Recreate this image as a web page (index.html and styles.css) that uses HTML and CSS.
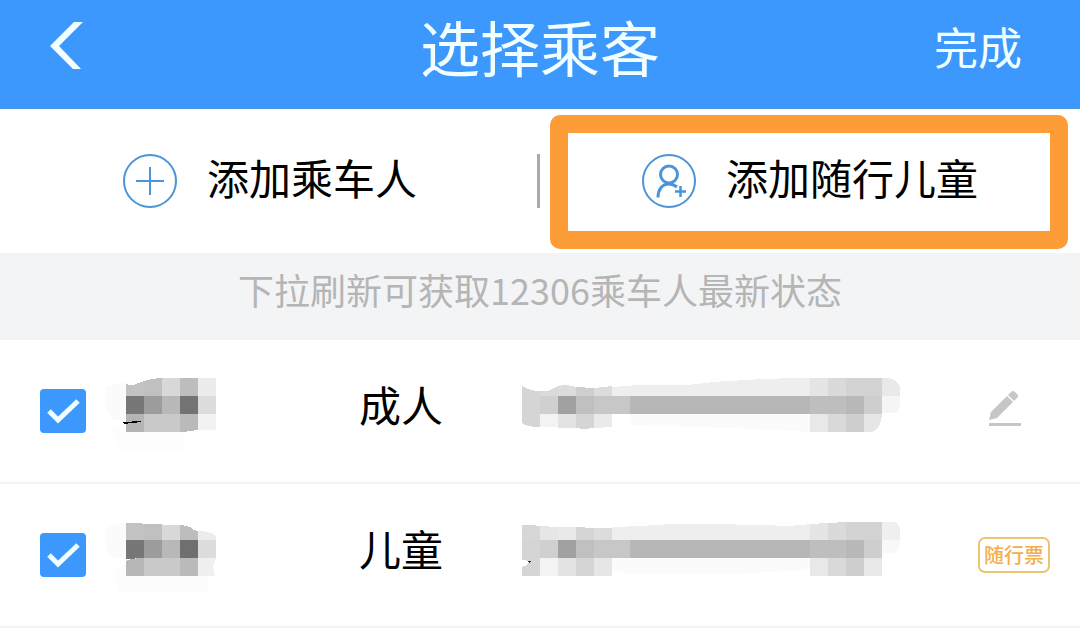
FILE: index.html
```html
<!doctype html>
<html lang="zh-CN">
<head>
<meta charset="utf-8">
<meta name="viewport" content="width=device-width">
<title>选择乘客</title>
<link rel="stylesheet" href="styles.css">
</head>
<body>
    <header>
        <button type="button" class="back" aria-label="返回">
            <svg width="34" height="48" viewBox="0 0 34 48"><path d="M24 0h9L9 24l22 23h-8L0 24z" fill="#f2ffff"/></svg>
        </button>
        <h1>选择乘客</h1>
        <button type="button" class="done">完成</button>
    </header>

    <nav>
        <button type="button" class="add">
            <svg width="54" height="54" viewBox="0 0 54 54" fill="none" stroke="#4b94d8" stroke-width="2">
                <circle cx="27" cy="27" r="26"/>
                <path d="M13 27h28M27 13v28"/>
            </svg>
            <span>添加乘车人</span>
        </button>
        <button type="button" class="add highlight">
            <svg width="54" height="54" viewBox="0 0 54 54" fill="none" stroke="#4b94d8" stroke-width="2">
                <circle cx="27" cy="27" r="26"/>
                <circle cx="27" cy="20.500" r="8.500" stroke-width="3"/>
                <path d="M16 43.500c0-8 4-13.500 11-13.500 3 0 5.500 1 8 3" stroke-width="3"/>
                <path d="M33 37.500h11M38.500 32v11" stroke-width="2.500"/>
            </svg>
            <span>添加随行儿童</span>
        </button>
    </nav>

    <p class="hint">下拉刷新可获取12306乘车人最新状态</p>

    <ul class="passengers">
        <li>
            <label class="tick">
                <input type="checkbox" checked aria-label="成人">
                <svg width="46" height="44" viewBox="0 0 46 44"><path d="M9 22l9 9 20-19" fill="none" stroke="#f2ffff" stroke-width="5"/></svg>
            </label>
            <!-- masked name -->
            <svg class="mask" width="120" height="80" viewBox="106 372 120 80" shape-rendering="crispEdges">
                <path d="M106 387q10-5 20-5v38h-12q-8-6-8-16z" fill="#fbfbfb"/>
                <path d="M112 426h14v6h57v20h-65z" fill="#fdfdfd"/>
                <path d="M126 384q6 2 10 0l8-3v15h-18z" fill="#c3c3c3"/>
                <path d="M144 381q9-3 18-3v18h-18z" fill="#c0c0c0"/>
                <path d="M162 378h18v18h-18z" fill="#d8d8d8"/>
                <path d="M180 378h18v18h-18z" fill="#bdbdbd"/>
                <path d="M198 378h16l2 2v16h-18z" fill="#ececec"/>
                <path d="M126 396h18v18h-18z" fill="#777"/>
                <path d="M144 396h18v18h-18z" fill="#9c9c9c"/>
                <path d="M162 396h18v18h-18z" fill="#b8b8b8"/>
                <path d="M180 396h18v18h-18z" fill="#737373"/>
                <path d="M198 396h18v18h-18z" fill="#dcdcdc"/>
                <path d="M126 414h18v18h-18z" fill="#b4b4b4"/>
                <path d="M144 414h36v18h-36z" fill="#c9c9c9"/>
                <path d="M180 414h18v16l-15 2h-3z" fill="#bababa"/>
                <path d="M198 414h18v16h-18z" fill="#f2f2f2"/>
                <path d="M123 422l18-1v1l-17 2z" fill="#000"/>
            </svg>
            <span class="type">成人</span>
            <!-- masked document number -->
            <svg class="mask" width="380" height="80" viewBox="522 372 380 80" shape-rendering="crispEdges">
                <path d="M630 414h180v18l-80-4-100-3z" fill="#fbfbfb"/>
                <path d="M522 386q8 5 18 5v36q-14 0-18-4z" fill="#d5d5d5"/>
                <path d="M540 391h8q5-3 10-5v10h-18z" fill="#dadada"/>
                <path d="M558 386q9-2 18 1v9h-18z" fill="#dcdcdc"/>
                <path d="M576 387l18 1v8h-18z" fill="#cfcfcf"/>
                <path d="M594 388l18-2v10h-18z" fill="#dcdcdc"/>
                <path d="M612 387q20-2 40-2h35q30-4 60-5 30-2 63-2v18H612z" fill="#eee"/>
                <path d="M810 378h18v18h-18z" fill="#e5e5e5"/>
                <path d="M828 378h18v18h-18z" fill="#dadada"/>
                <path d="M846 378h36v18h-36z" fill="#d3d3d3"/>
                <path d="M882 378h6q12 2 12 12v6h-18z" fill="#e9e9e9"/>
                <path d="M540 396h18v18h-18z" fill="#d0d0d0"/>
                <path d="M558 396h18v18h-18z" fill="#a1a1a1"/>
                <path d="M576 396h18v18h-18z" fill="#c0c0c0"/>
                <path d="M594 396h36v18h-36z" fill="#c7c7c7"/>
                <path d="M630 396h180v18h-180z" fill="#b7b7b7"/>
                <path d="M810 396h36v18h-36z" fill="#bebebe"/>
                <path d="M846 396h18v18h-18z" fill="#b8b8b8"/>
                <path d="M864 396h18v18h-18z" fill="#cecece"/>
                <path d="M882 396h18v10q-1 7-7 7h-11z" fill="#f5f5f5"/>
                <path d="M540 414h18v13h-18z" fill="#f3f3f3"/>
                <path d="M558 414h18v14h-18z" fill="#e3e3e3"/>
                <path d="M576 414h18v14l-10 1-8-1z" fill="#d5d5d5"/>
                <path d="M594 414h18v13l-18 1z" fill="#eaeaea"/>
                <path d="M810 414h18v18h-18z" fill="#e8e8e8"/>
                <path d="M828 414h18v18h-18z" fill="#d9d9d9"/>
                <path d="M846 414h18v18h-18z" fill="#cecece"/>
                <path d="M864 414h18q-1 16-11 18h-7z" fill="#e6e6e6"/>
            </svg>
            <button type="button" class="edit" aria-label="编辑">
                <svg width="34" height="38" viewBox="0 0 34 38" fill="#c6c6c6">
                    <path d="M1 33h32v3H1z"/>
                    <path d="M1 30l2-8L19 6l6 6L9 28z"/>
                    <path d="M20 5l3-3q2-2 4 0l2 2q2 2 0 4l-3 3z"/>
                </svg>
            </button>
        </li>
        <li>
            <label class="tick">
                <input type="checkbox" checked aria-label="儿童">
                <svg width="46" height="44" viewBox="0 0 46 44"><path d="M9 22l9 9 20-19" fill="none" stroke="#f2ffff" stroke-width="5"/></svg>
            </label>
            <svg class="mask" width="120" height="80" viewBox="106 516 120 80" shape-rendering="crispEdges">
                <path d="M106 528q10-5 20-5v35h-12q-8-6-8-16z" fill="#fbfbfb"/>
                <path d="M114 571l12-8v13h82v16h-88z" fill="#fcfcfc"/>
                <path d="M126 523h14l4 1v16h-18z" fill="#c3c3c3"/>
                <path d="M144 524h18v16h-18z" fill="#c0c0c0"/>
                <path d="M162 525h18v15h-18z" fill="#d8d8d8"/>
                <path d="M180 525q11 1 14 5l4 1v9h-18z" fill="#bdbdbd"/>
                <path d="M198 531q14 0 18 6v3h-18z" fill="#ececec"/>
                <path d="M126 540h18v18l-18 1z" fill="#777"/>
                <path d="M144 540h18v18h-18z" fill="#9c9c9c"/>
                <path d="M162 540h18v18h-18z" fill="#b8b8b8"/>
                <path d="M180 540h18v18h-18z" fill="#6f6f6f"/>
                <path d="M198 540h18v18h-18z" fill="#dcdcdc"/>
                <path d="M126 561q6-3 18-3v18h-18z" fill="#b7b7b7"/>
                <path d="M144 558h36v18h-36z" fill="#c9c9c9"/>
                <path d="M180 558h18v18h-18z" fill="#bababa"/>
                <path d="M198 558h18l-3 8 2 10h-17z" fill="#f0f0f0"/>
            </svg>
            <span class="type">儿童</span>
            <svg class="mask" width="380" height="80" viewBox="522 516 380 80" shape-rendering="crispEdges">
                <path d="M612 558h198v12l-80 4h-100l-18-4z" fill="#fbfbfb"/>
                <path d="M522 525h10l8 1v14h-18z" fill="#d7d7d7"/>
                <path d="M540 526l18 1v13h-18z" fill="#e6e6e6"/>
                <path d="M558 527h18v13h-18z" fill="#e9e9e9"/>
                <path d="M576 527l18 1v12h-18z" fill="#d5d5d5"/>
                <path d="M594 528h18v12h-18z" fill="#dcdcdc"/>
                <path d="M612 527q35-1 60-3h30l65 1q25 2 43-1v16H612z" fill="#eee"/>
                <path d="M810 524l18-1v17h-18z" fill="#e5e5e5"/>
                <path d="M828 523l18-1v18h-18z" fill="#dadada"/>
                <path d="M846 522h36v18h-36z" fill="#d3d3d3"/>
                <path d="M882 522h13q5 2 5 8v10h-18z" fill="#efefef"/>
                <path d="M522 540h18v36h-18z" fill="#d5d5d5"/>
                <path d="M540 540h18v18h-18z" fill="#d0d0d0"/>
                <path d="M558 540h18v18h-18z" fill="#a1a1a1"/>
                <path d="M576 540h18v18h-18z" fill="#c0c0c0"/>
                <path d="M594 540h36v18h-36z" fill="#c7c7c7"/>
                <path d="M630 540h180v18h-180z" fill="#b7b7b7"/>
                <path d="M810 540h36v18h-36z" fill="#bebebe"/>
                <path d="M846 540h18v18h-18z" fill="#b8b8b8"/>
                <path d="M864 540h18v18h-18z" fill="#cecece"/>
                <path d="M882 540h18q0 12-7 13h-11z" fill="#f8f8f8"/>
                <path d="M522 560l8 1-3 4-5 2z" fill="#fff"/>
                <path d="M527 561h4l-2 2z" fill="#333"/>
                <path d="M540 558h18v18h-18z" fill="#f3f3f3"/>
                <path d="M558 558h18v18h-18z" fill="#e3e3e3"/>
                <path d="M576 558h18v18h-18z" fill="#d5d5d5"/>
                <path d="M594 558h18v18h-18z" fill="#e6e6e6"/>
                <path d="M810 558h18v18h-18z" fill="#e8e8e8"/>
                <path d="M828 558h18v18h-18z" fill="#d9d9d9"/>
                <path d="M846 558h18v18h-18z" fill="#cecece"/>
                <path d="M864 558h18v18h-18z" fill="#e8e8e8"/>
            </svg>
            <span class="tag">随行票</span>
        </li>
    </ul>
</body>
</html>
```
FILE: styles.css
```css
*
{
    box-sizing:border-box;
}
body
{
    margin:0;
    background:#fff;
    color:#000;
    font-family:"Noto Sans CJK SC", sans-serif;
}
button
{
    border:none;
    padding:0;
    background:none;
    color:inherit;
    font-family:inherit;
    cursor:pointer;
}
svg
{
    display:block;
}

header
{
    display:grid;
    grid-template-columns:1fr auto 1fr;
    align-items:center;
    padding-bottom:15px;
    border-bottom:2px solid #4b95e2;
    background:#3c98fc;
    color:#f2ffff;
}
h1
{
    margin:0;
    font-size:60px;
    font-weight:normal;
    line-height:92px;
}
.back
{
    justify-self:start;
    margin-left:50px;
}
.done
{
    justify-self:end;
    margin-right:58px;
    font-size:44px;
    line-height:64px;
}

nav
{
    display:grid;
    grid-template-columns:1fr 1fr;
}
.add
{
    position:relative;
    display:flex;
    align-items:center;
    justify-content:center;
    gap:30px;
    height:144px;
    font-size:42px;
    line-height:64px;
}
.add span
{
    padding-bottom:8px;
}
.add:first-child::after
{
    content:"";
    position:absolute;
    right:0;
    top:45px;
    bottom:45px;
    width:3px;
    background:#aaa;
}
.highlight::before
{
    content:"";
    position:absolute;
    top:6px;
    right:12px;
    bottom:4px;
    left:10px;
    border:18px solid #fd9d37;
    border-radius:10px;
}

.hint
{
    margin:0;
    padding:4px 0 19px;
    background:#f3f4f6;
    color:#b5b5b5;
    font-size:36px;
    line-height:64px;
    text-align:center;
}

.passengers
{
    margin:0;
    padding:0;
    list-style:none;
}
.passengers li
{
    display:grid;
    grid-template-columns:66px 253fr 163fr 428fr 100px;
    align-items:center;
    height:144px;
    padding:0 30px 0 40px;
    border-bottom:2px solid #f3f3f3;
}
.tick
{
    position:relative;
    width:46px;
    height:44px;
}
.tick input
{
    display:block;
    width:46px;
    height:44px;
    margin:0;
    appearance:none;
    border-radius:4px;
    background:#3c98fc;
}
.tick svg
{
    position:absolute;
    top:0;
    left:0;
    pointer-events:none;
}
.tick input:not(:checked) + svg
{
    display:none;
}
.mask
{
    max-width:100%;
    margin-top:2px;
}
.type
{
    padding-bottom:14px;
    font-size:42px;
    line-height:64px;
}
.edit
{
    justify-self:end;
    margin:0 28px 4px 0;
}
.tag
{
    justify-self:end;
    padding:0 4px;
    border:2px solid #ecc474;
    border-radius:7px;
    color:#f3ae4b;
    font-size:20px;
    font-weight:500;
    line-height:32px;
}
```
